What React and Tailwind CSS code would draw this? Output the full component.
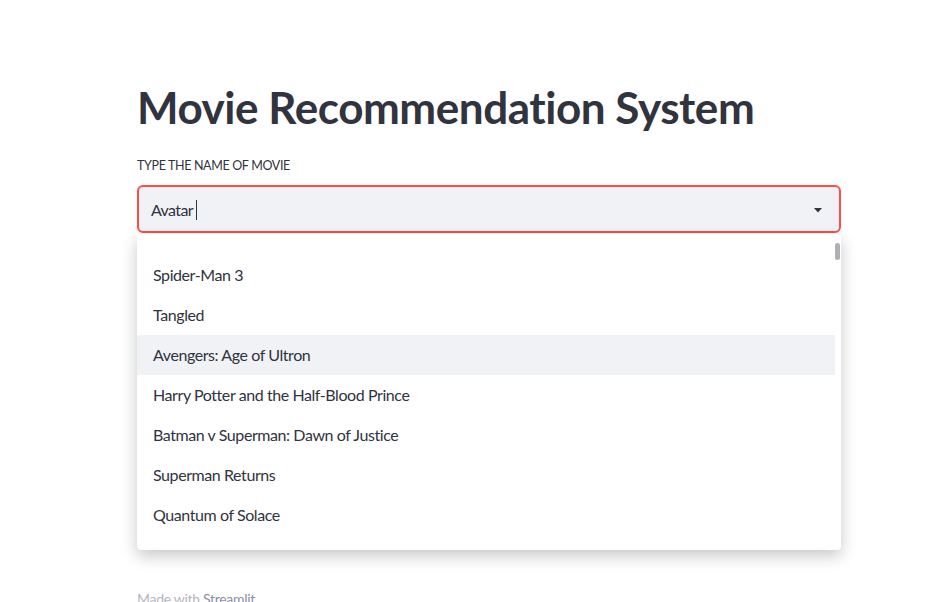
import React from "react";

const items = [
  "Spider-Man 3",
  "Tangled",
  "Avengers: Age of Ultron",
  "Harry Potter and the Half-Blood Prince",
  "Batman v Superman: Dawn of Justice",
  "Superman Returns",
  "Quantum of Solace",
];

export default function App() {
  return (
    <div
      className="w-[944px] h-[602px] bg-white overflow-hidden relative text-[#31333f]"
      style={{ fontFamily: "Lato, 'Noto Sans', sans-serif" }}
    >
      <div className="pl-[137px] pr-[103px] pt-[78px]">
        <h1 className="text-[44px] font-bold leading-[58px] tracking-[-0.45px] text-[#31333f]">
          Movie Recommendation System
        </h1>
        <div className="mt-[22px] text-[12.5px] leading-[16px] uppercase tracking-[-0.35px] text-[#31333f]">
          Type the name of movie
        </div>
        <div className="relative mt-[11px]">
          <div className="h-[48px] rounded-[6px] border-2 border-[#ff4b4b] bg-[#f0f2f6] flex items-center pl-[12px] pr-[17px]">
            <span className="text-[16px] tracking-[-0.6px] mt-[2px]">Avatar</span>
            <span className="w-[1px] h-[20px] bg-[#31333f] ml-[3px] mt-[2px]"></span>
            <div className="flex-1"></div>
            <svg width="8" height="5" viewBox="0 0 8 5" className="mt-[2px]">
              <path d="M0 0 H8 L4 4.5 Z" fill="#31333f" />
            </svg>
          </div>
          <div className="absolute left-0 right-0 top-[49px] h-[316px] bg-white rounded-b-[4px] shadow-[0_6px_16px_rgba(0,0,0,0.22)] z-10">
            <div className="pt-[21px] pr-[6px]">
              {items.map((t, i) => (
                <div
                  key={t}
                  className={
                    "h-[40px] flex items-center pl-[16px] text-[16px] tracking-[-0.42px] " +
                    (i === 2 ? "bg-[#f0f2f6]" : "")
                  }
                >
                  {t}
                </div>
              ))}
            </div>
            <div className="absolute right-[1px] top-[9px] w-[5px] h-[17px] rounded-full bg-[#b0b0b4]"></div>
          </div>
        </div>
        <div className="mt-[355px] text-[14px] tracking-[-0.3px] text-[#b3b6c2]">
          Made with <span className="text-[#8b8fa0]">Streamlit</span>
        </div>
      </div>
    </div>
  );
}
